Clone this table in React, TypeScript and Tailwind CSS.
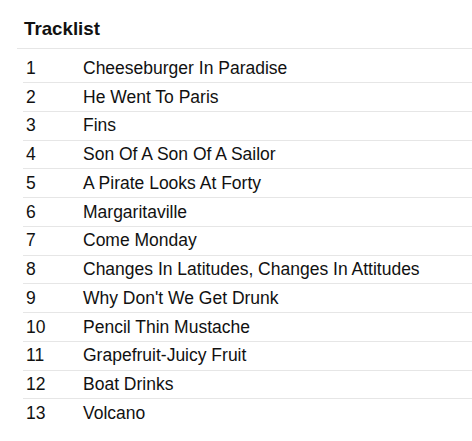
import React from 'react';

const tracks = [
  'Cheeseburger In Paradise',
  'He Went To Paris',
  'Fins',
  'Son Of A Son Of A Sailor',
  'A Pirate Looks At Forty',
  'Margaritaville',
  'Come Monday',
  'Changes In Latitudes, Changes In Attitudes',
  "Why Don't We Get Drunk",
  'Pencil Thin Mustache',
  'Grapefruit-Juicy Fruit',
  'Boat Drinks',
  'Volcano',
];

export default function App() {
  return (
    <div className="min-h-[441px] bg-white text-[#111] font-['Liberation_Sans',Arial,sans-serif]">
      <div className="pt-[18px] pl-[17px]">
        {/* Header */}
        <div className="border-b border-[#e6e6e6] pl-[7px] pb-[8px]">
          <h3 className="text-[18.72px] font-bold leading-[21.5px]">Tracklist</h3>
        </div>

        {/* Track rows */}
        <ul className="mt-[6px] ml-[6px]">
          {tracks.map((title, i) => (
            <li
              key={title}
              className={
                'flex text-[17.5px] leading-[20.1px] pt-[3.4px] pb-[4.25px] ' +
                (i < tracks.length - 1 ? 'border-b border-[#e6e6e6]' : '')
              }
            >
              <span className="w-[60px] pl-[3px] shrink-0">{i + 1}</span>
              <span>{title}</span>
            </li>
          ))}
        </ul>
      </div>
    </div>
  );
}
